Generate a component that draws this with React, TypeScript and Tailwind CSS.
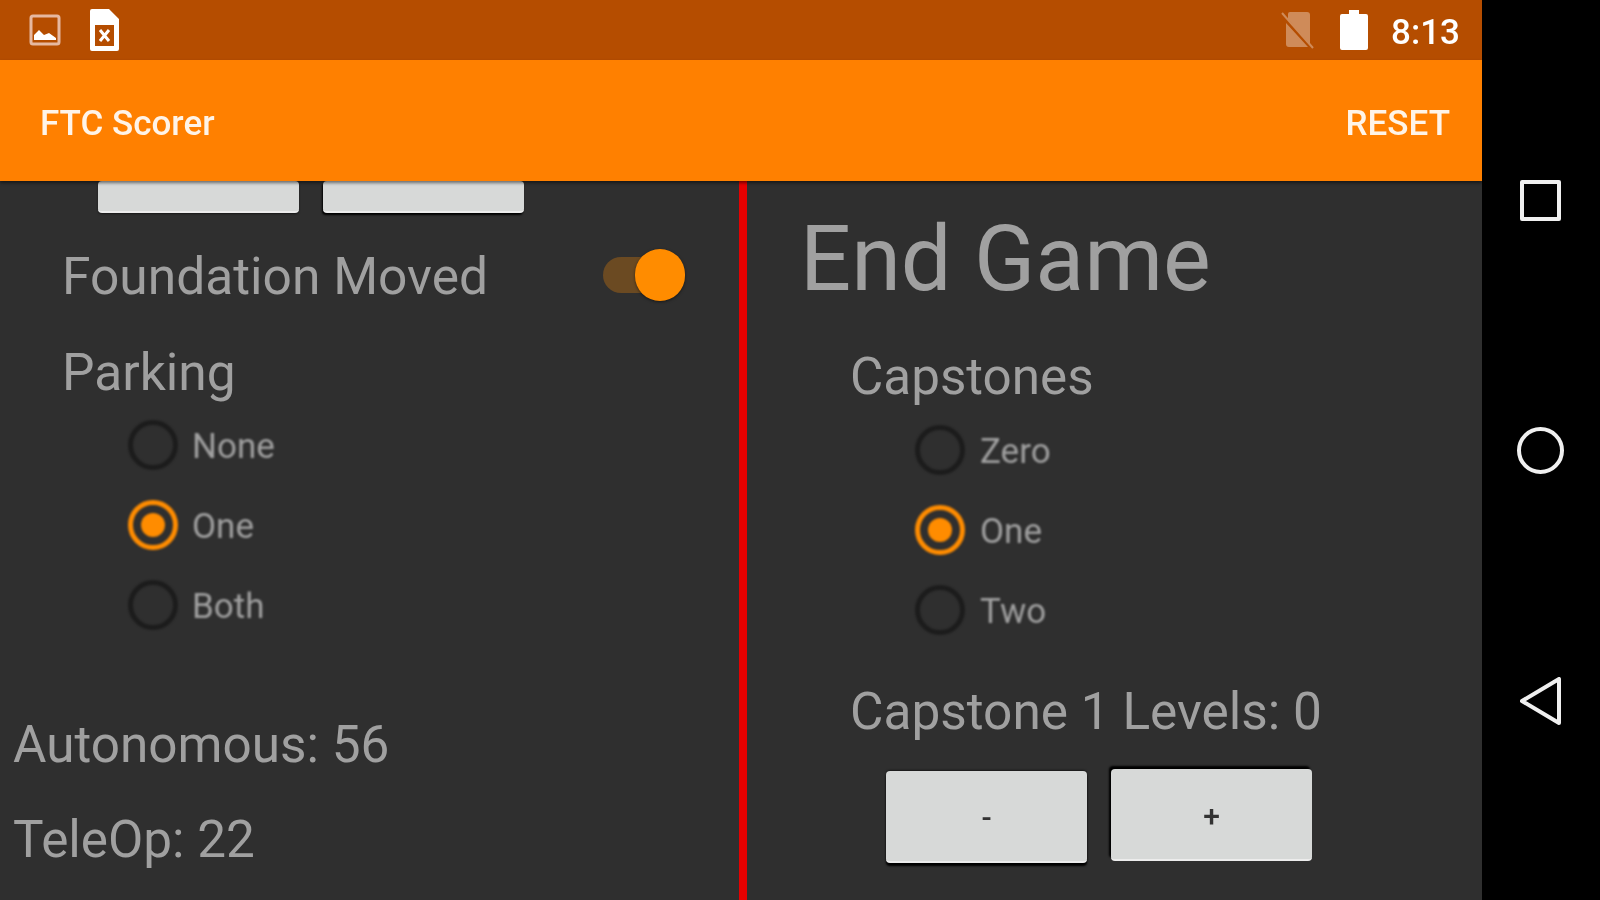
import { type ReactNode } from 'react'

const label = "blur-[0.7px] text-[#a0a0a0]"

function Radio({ text, checked, gap = 'ml-[14px]' }: { text: string; checked?: boolean; gap?: string }) {
  return (
    <div className="flex h-[80px] items-center blur-[0.8px]">
      <div
        className={
          checked
            ? 'mb-[2px] ml-[1px] flex h-[50px] w-[50px] items-center justify-center rounded-full border-[5px] border-[#ff8c00]'
            : 'mb-[2px] ml-[1px] h-[50px] w-[50px] rounded-full border-[5px] border-[#1c1c1c]'
        }
      >
        {checked && <div className="h-[24px] w-[24px] rounded-full bg-[#ff8c00]" />}
      </div>
      <span className={`${gap} text-[35px] leading-none text-[#a0a0a0]`}>{text}</span>
    </div>
  )
}

function GameButton({ children, className }: { children?: ReactNode; className: string }) {
  return (
    <button
      type="button"
      className={`flex w-[201px] items-center justify-center rounded-[4px] border-b-[2px] border-[#ececec] bg-[#d7d9d8] pt-[2px] text-[30px] font-medium text-[#333333] blur-[0.6px] ${className}`}
    >
      {children}
    </button>
  )
}

function StatusIcons() {
  return (
    <div className="flex h-[60px] shrink-0 items-center bg-[#b54d00] pl-[29px] pr-[22px]">
      <svg width="32" height="32" viewBox="0 0 32 32" className="blur-[0.6px]">
        <rect x="2" y="2" width="28" height="28" rx="2" fill="none" stroke="#e6b8a0" strokeWidth="3" />
        <path d="M5 26 L5 21 L10 16 L15 21 L20 19 L27 24 L27 26 Z" fill="#fff" />
      </svg>
      <svg width="30" height="44" viewBox="0 0 30 44" className="ml-[28px] mt-[2px] blur-[0.6px]">
        <path
          fillRule="evenodd"
          d="M3 0 H20 L30 10 V40 Q30 42 28 42 H3 Q1 42 1 40 V2 Q1 0 3 0 Z M6 16 V37 H25 V16 Z"
          fill="#fff"
        />
        <path d="M11 21 L20 32 M20 21 L11 32" stroke="#fff" strokeWidth="3" />
      </svg>
      <div className="flex-1" />
      <svg width="34" height="38" viewBox="0 0 34 38" className="mr-[-4px] opacity-35 blur-[0.6px]">
        <path d="M9 1 H26 Q29 1 29 4 V33 L7 8 V3 Q7 1 9 1 Z M5 12 L27 36 H8 Q5 36 5 33 Z" fill="#fff" />
        <path d="M1 2 L32 37" stroke="#fff" strokeWidth="2" />
      </svg>
      <svg width="28" height="40" viewBox="0 0 28 40" className="ml-[29px] blur-[0.6px]">
        <path d="M9 0 H19 V4 H26 Q28 4 28 6 V38 Q28 40 26 40 H2 Q0 40 0 38 V6 Q0 4 2 4 H9 Z" fill="#fff" />
      </svg>
      <span className="ml-[23px] pt-[4px] text-[35px] font-medium leading-none text-white blur-[0.6px]">8:13</span>
    </div>
  )
}

function NavBar() {
  return (
    <div className="flex w-[118px] shrink-0 flex-col items-center bg-black pr-[1px] pt-[180px]">
      <div className="h-[41px] w-[41px] rounded-[2px] border-[4px] border-[#f0f0f0] blur-[0.6px]" />
      <div className="mt-[206px] h-[47px] w-[47px] rounded-full border-[4px] border-[#f0f0f0] blur-[0.6px]" />
      <svg width="44" height="50" viewBox="0 0 44 50" className="mt-[202px] blur-[0.6px]">
        <path d="M3 25 L40 3 V47 Z" fill="none" stroke="#f0f0f0" strokeWidth="4" strokeLinejoin="round" />
      </svg>
    </div>
  )
}

export default function App() {
  return (
    <div className="flex h-[900px] w-[1600px] overflow-hidden bg-black font-['Roboto',sans-serif]">
      <div className="flex w-[1482px] shrink-0 flex-col">
        <StatusIcons />
        <div className="z-10 flex h-[121px] shrink-0 items-center justify-between bg-[#ff8000] pl-[40px] pr-[32px] pt-[8px] shadow-[0_2px_3px_rgba(0,0,0,0.5)]">
          <span className="text-[35px] font-medium text-[#fff4e8] blur-[0.6px]">FTC Scorer</span>
          <span className="text-[35px] font-medium text-[#fff4e8] blur-[0.6px]">RESET</span>
        </div>

        <div className="flex min-h-0 flex-1 bg-[#2f2f2f]">
          {/* left column: scrolled part way down */}
          <div className="w-[739px] shrink-0">
            <div className="flex gap-[24px] pl-[98px]">
              <GameButton className="h-[32px] shadow-[0_1px_2px_rgba(0,0,0,0.5)]" />
              <GameButton className="h-[32px] shadow-[-1px_2px_2px_#000]" />
            </div>
            <div className="mt-[32px] flex h-[60px] items-center justify-between pl-[62px] pr-[54px]">
              <span className={`pt-[4px] text-[51.5px] leading-none ${label}`}>Foundation Moved</span>
              <div className="relative h-[36px] w-[82px] rounded-full bg-[#6b4a22] blur-[0.6px]">
                <div className="absolute right-0 top-[-8px] h-[52px] w-[50px] rounded-full bg-[#ff8c00] shadow-[0_1px_3px_rgba(0,0,0,0.5)]" />
              </div>
            </div>
            <div className={`mt-[38px] pl-[62px] text-[51.5px] leading-[60px] ${label}`}>Parking</div>
            <div className="mt-[3px] pl-[127px]">
              <Radio text="None" />
              <Radio text="One" checked />
              <Radio text="Both" />
            </div>
            <div className={`mt-[69px] pl-[13px] text-[51.3px] leading-[60px] ${label}`}>Autonomous: 56</div>
            <div className={`mt-[35px] pl-[13px] text-[51.3px] leading-[60px] ${label}`}>TeleOp: 22</div>
          </div>

          <div className="w-[8px] shrink-0 bg-[#e60000]" />

          <div className="min-w-0 flex-1">
            <div className={`mt-[29px] pl-[53px] text-[90px] leading-[100px] ${label}`}>End Game</div>
            <div className={`mt-[37px] pl-[103px] text-[51.2px] leading-[60px] ${label}`}>Capstones</div>
            <div className="mt-[4px] pl-[167px]">
              <Radio text="Zero" gap="ml-[15px]" />
              <Radio text="One" checked gap="ml-[15px]" />
              <Radio text="Two" gap="ml-[15px]" />
            </div>
            <div className={`mt-[31px] pl-[103px] text-[51.4px] leading-[60px] ${label}`}>Capstone 1 Levels: 0</div>
            <div className="mt-[27px] flex items-start gap-[24px] pl-[139px]">
              <GameButton className="mt-[2px] h-[92px] shadow-[0_3px_2px_#000,0_-1px_2px_rgba(0,0,0,0.5)]">-</GameButton>
              <GameButton className="h-[92px] shadow-[-2px_-3px_2px_#000]">+</GameButton>
            </div>
          </div>
        </div>
      </div>
      <NavBar />
    </div>
  )
}
